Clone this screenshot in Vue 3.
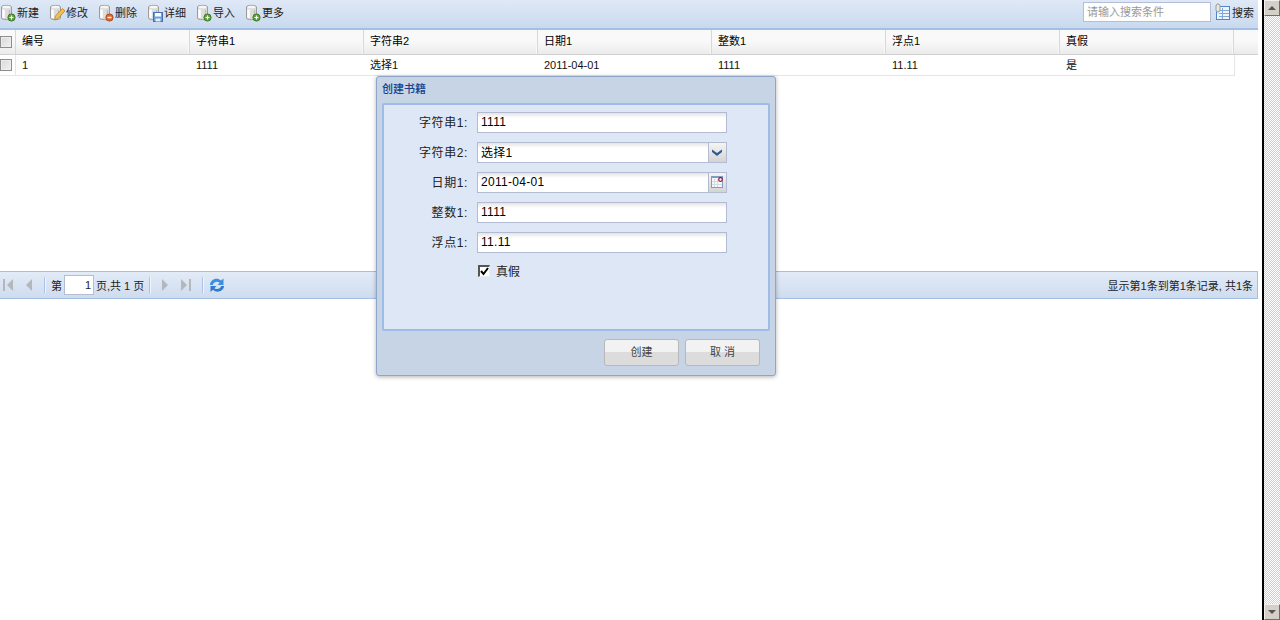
<script setup>
const tools = [
  { label: '新建', badge: 'add' },
  { label: '修改', badge: 'edit' },
  { label: '删除', badge: 'del' },
  { label: '详细', badge: 'save' },
  { label: '导入', badge: 'add' },
  { label: '更多', badge: 'add' },
]
const cols = ['编号', '字符串1', '字符串2', '日期1', '整数1', '浮点1', '真假']
const row = ['1', '1111', '选择1', '2011-04-01', '1111', '11.11', '是']
const fields = [
  { label: '字符串1:', value: '1111' },
  { label: '字符串2:', value: '选择1', addon: 'select' },
  { label: '日期1:', value: '2011-04-01', addon: 'date' },
  { label: '整数1:', value: '1111' },
  { label: '浮点1:', value: '11.11' },
]
</script>

<template>
  <div class="page">
    <div class="main">
      <div class="toolbar">
        <div v-for="t in tools" :key="t.label" class="tool">
          <svg class="ico" width="16" height="18" viewBox="0 0 16 18">
            <path d="M1.5 3C1.5 .8 11.5 .8 11.5 3V14C11.5 16.2 1.5 16.2 1.5 14Z" fill="#dcdcdc" stroke="#9c9c9c" />
            <ellipse cx="6.5" cy="3" rx="4" ry="1.3" fill="#f6f6f6" />
            <path d="M3.5 5.5V14" stroke="#fff" stroke-width="2.4" />
            <path d="M9.5 6V14" stroke="#bdbdbd" stroke-width="1.4" />
            <g v-if="t.badge === 'add'">
              <circle cx="11.5" cy="13.5" r="3.6" fill="#5f9f3c" stroke="#3f7a25" />
              <path d="M9.5 13.5H13.5M11.5 11.5V15.5" stroke="#fff" stroke-width="1.2" />
            </g>
            <g v-else-if="t.badge === 'del'">
              <circle cx="11.5" cy="13.5" r="3.6" fill="#e0662a" stroke="#b5481a" />
              <path d="M9.5 13.5H13.5" stroke="#fff" stroke-width="1.4" />
            </g>
            <g v-else-if="t.badge === 'edit'">
              <path d="M5.5 16L6.5 12L13.5 4.5L16 6.8L9 14.5Z" fill="#f2c14f" stroke="#b5832a" stroke-width=".8" />
            </g>
            <g v-else>
              <rect x="6.5" y="8.5" width="9" height="9" fill="#6d9ee0" stroke="#3f6fb8" />
              <rect x="8" y="9" width="6" height="3.5" fill="#fff" />
              <rect x="8.5" y="14.5" width="5" height="3" fill="#e6edf8" />
            </g>
          </svg>
          <span>{{ t.label }}</span>
        </div>
        <div class="spacer"></div>
        <div class="searchbox">请输入搜索条件</div>
        <div class="searchbtn">
          <svg width="16" height="18" viewBox="0 0 16 18">
            <rect x="1.5" y="3.5" width="13" height="13" fill="#eef4fb" stroke="#4f86c6" />
            <path d="M4 7.5H14M4 10.5H14M4 13.5H14M7.5 5V16" stroke="#7fa8d8" />
            <rect x="1" y="1" width="4" height="8" rx="2" fill="#e8e8e8" stroke="#999" />
          </svg>
          <span>搜索</span>
        </div>
      </div>

      <div class="grid">
        <div class="grid-head">
          <div class="chk-cell"><i class="chk"></i></div>
          <div v-for="c in cols" :key="c" class="hcell">{{ c }}</div>
          <div class="hrest"></div>
        </div>
        <div class="grid-row">
          <div class="chk-cell rowchk"><i class="chk"></i></div>
          <div v-for="(c, i) in row" :key="i" class="cell">{{ c }}</div>
        </div>
      </div>

      <div class="pager">
        <svg class="pg first" width="13" height="14" viewBox="0 0 13 14"><rect x="1" y="1" width="2" height="12" fill="#b4b8bd" /><path d="M11 1V13L5 7Z" fill="#b4b8bd" /></svg>
        <svg class="pg prev" width="11" height="14" viewBox="0 0 11 14"><path d="M9 1V13L3 7Z" fill="#b4b8bd" /></svg>
        <i class="sep s1"></i>
        <span class="pg-t">第</span>
        <div class="pg-input">1</div>
        <span class="pg-t2">页,共 1 页</span>
        <i class="sep s2"></i>
        <svg class="pg next" width="11" height="14" viewBox="0 0 11 14"><path d="M3 1V13L9 7Z" fill="#b4b8bd" /></svg>
        <svg class="pg last" width="13" height="14" viewBox="0 0 13 14"><path d="M2 1V13L8 7Z" fill="#b4b8bd" /><rect x="10" y="1" width="2" height="12" fill="#b4b8bd" /></svg>
        <i class="sep s3"></i>
        <svg class="refresh" width="16" height="16" viewBox="0 0 16 16">
          <path d="M1 8C1 2.5 8 -.5 12 3.5L14.5 1.5V8H8.5L10.7 5.7C8 3.5 4.5 5 3.8 8Z" fill="#3d8fe0" />
          <path d="M15 9C15 13.8 8 16.8 4 12.8L1.5 15V9H7.5L5.4 11.2C8 13 11.5 11.7 12.2 9Z" fill="#2f7ad0" />
        </svg>
        <div class="spacer"></div>
        <span class="pg-info">显示第1条到第1条记录, 共1条</span>
      </div>
    </div>

    <div class="gutter"></div>
    <div class="scrollbar">
      <div class="sb-btn"><i class="up"></i></div>
      <div class="sb-track"></div>
      <div class="sb-btn"><i class="down"></i></div>
    </div>

    <div class="dialog">
      <div class="dlg-title">创建书籍</div>
      <div class="dlg-body">
        <div v-for="f in fields" :key="f.label" class="frow">
          <label class="flabel">{{ f.label }}</label>
          <div class="finput">
            <span class="fval">{{ f.value }}</span>
            <div v-if="f.addon" class="addon">
              <svg v-if="f.addon === 'select'" width="16" height="19" viewBox="0 0 16 19">
                <path d="M3 6.5L8 10L13 6.5V9L8 13L3 9Z" fill="#2f5a96" />
              </svg>
              <svg v-else width="16" height="19" viewBox="0 0 16 19">
                <rect x="2.5" y="3.5" width="11" height="11" fill="#f4f6fa" stroke="#7f9cc4" />
                <rect x="2" y="3" width="12" height="2" fill="#7f9cc4" />
                <path d="M5.5 6V14M8.5 6V14M3 8.5H13M3 11.5H13" stroke="#d5dbe6" />
                <circle cx="11.5" cy="6.5" r="1.8" fill="#fff" stroke="#9c1026" stroke-width="1.2" />
              </svg>
            </div>
          </div>
        </div>
        <div class="frow checkrow">
          <div class="flabel"></div>
          <i class="dlg-check">
            <svg width="9" height="9" viewBox="0 0 9 9"><path d="M1 4L3.5 7L8 1" fill="none" stroke="#000" stroke-width="2" /></svg>
          </i>
          <span class="check-t">真假</span>
        </div>
      </div>
      <div class="dlg-foot">
        <div class="btn">创建</div>
        <div class="btn">取 消</div>
      </div>
    </div>
  </div>
</template>

<style scoped>
.page {
  position: relative;
  display: flex;
  width: 1280px;
  height: 620px;
  overflow: hidden;
  background: #fff;
  font: 11px "Liberation Sans", "Noto Sans CJK SC", sans-serif;
  color: #000;
}
.main { width: 1258px; flex: none; display: flex; flex-direction: column; }
.spacer { flex: 1; }

.toolbar {
  height: 24px;
  box-sizing: content-box;
  display: flex;
  align-items: center;
  background: linear-gradient(#dfe9f6, #c9d9ee);
  border-bottom: 2px solid #a3bfe4;
  padding-right: 4px;
  padding-bottom: 4px;
  color: #222;
}
.tool { width: 49px; display: flex; align-items: center; flex: none; }
.ico { flex: none; margin-top: 2px; }
.tool span { margin-left: 1px; }
.searchbox {
  width: 123px;
  height: 18px;
  line-height: 18px;
  padding-left: 3px;
  border: 1px solid #b3bdd6;
  background: #fff;
  color: #999;
  margin-right: 4px;
}
.searchbtn { display: flex; align-items: center; gap: 1px; }

.grid { height: 241px; }
.grid-head {
  display: flex;
  height: 24px;
  background: linear-gradient(#f9f9f9 45%, #ebebeb);
  border-bottom: 1px solid #d0d0d0;
}
.chk-cell { width: 15px; flex: none; border-right: 1px solid #d8d8d8; display: flex; align-items: center; overflow: hidden; }
.chk {
  display: block;
  flex: none;
  width: 10px;
  height: 10px;
  margin-left: 0;
  border: 1px solid #8d8d8d;
  background: linear-gradient(135deg, #d8d8d8, #f2f2f2);
  box-shadow: inset 0 0 0 1px #eee;
}
.hcell {
  flex: none;
  padding-left: 6px;
  box-sizing: border-box;
  width: 174px;
  line-height: 22px;
  border-right: 1px solid #d8d8d8;
  box-shadow: inset -1px 0 0 #f8f8f8;
}
.hrest { flex: 1; }
.grid-row {
  display: flex;
  width: 1235px;
  height: 21px;
  box-sizing: border-box;
  border-bottom: 1px solid #e6e6e6;
  border-right: 1px solid #e6e6e6;
}
.rowchk { border-right: 1px solid #e6e6e6; }
.cell { width: 174px; flex: none; box-sizing: border-box; padding-left: 6px; line-height: 20px; color: #111; }

.pager {
  height: 26px;
  display: flex;
  align-items: center;
  background: linear-gradient(#e2ebf7, #cfdcef);
  border-top: 1px solid #a3bfe4;
  border-bottom: 1px solid #a3bfe4;
  border-right: 1px solid #a3bfe4;
  color: #222;
}
.pg { flex: none; }
.first { margin-left: 2px; }
.prev { margin-left: 8px; }
.sep { display: block; width: 1px; height: 16px; background: #a9c3e8; box-shadow: 1px 0 0 #f0f5fb; flex: none; }
.s1 { margin-left: 10px; }
.pg-t { margin-left: 6px; }
.pg-input {
  width: 26px;
  height: 18px;
  line-height: 18px;
  margin-left: 2px;
  border: 1px solid #b5bdd0;
  background: #fff;
  text-align: right;
  padding-right: 2px;
  box-sizing: content-box;
}
.pg-t2 { margin-left: 2px; }
.s2 { margin-left: 5px; }
.next { margin-left: 9px; }
.last { margin-left: 9px; }
.s3 { margin-left: 10px; }
.refresh { margin-left: 6px; }
.pg-info { margin-right: 4px; }

.gutter { width: 4px; flex: none; }
.scrollbar {
  width: 18px;
  flex: none;
  border-left: 2px solid #000;
  box-sizing: border-box;
  display: flex;
  flex-direction: column;
  background-color: #fff;
  background-image: conic-gradient(#d4d0c8 25%, #fff 0 50%, #d4d0c8 0 75%, #fff 0);
  background-size: 2px 2px;
}
.sb-btn {
  height: 16px;
  background: #d4d0c8;
  border-top: 1px solid #f2f0ec;
  border-left: 1px solid #f2f0ec;
  border-right: 1px solid #6e6e6a;
  border-bottom: 1px solid #6e6e6a;
  box-sizing: border-box;
  display: flex;
  align-items: center;
  justify-content: center;
}
.sb-track { flex: 1; }
.up, .down { display: block; width: 0; height: 0; border-left: 4px solid transparent; border-right: 4px solid transparent; }
.up { border-bottom: 4px solid #555; }
.down { border-top: 4px solid #555; }

.dialog {
  position: absolute;
  left: 376px;
  top: 76px;
  width: 400px;
  height: 300px;
  box-sizing: border-box;
  background: #c7d4e6;
  border: 1px solid #8ea6c8;
  border-radius: 3px;
  box-shadow: 0 1px 4px rgba(0, 0, 0, .3);
  display: flex;
  flex-direction: column;
  font-size: 12px;
}
.dlg-title { height: 26px; line-height: 24px; padding-left: 5px; font-size: 11px; font-weight: 500; color: #15428b; flex: none; }
.dlg-body {
  margin: 0 5px;
  height: 228px;
  box-sizing: border-box;
  background: #dde7f6;
  border: 2px solid #9dbde8;
  border-radius: 2px;
  padding-top: 7px;
  flex: none;
}
.frow { display: flex; align-items: center; height: 21px; margin-bottom: 9px; }
.flabel { text-align: right; padding-right: 9px; padding-bottom: 2px; flex: none; width: 84px; color: #222; letter-spacing: .6px; }
.finput {
  width: 250px;
  height: 21px;
  box-sizing: border-box;
  border: 1px solid #b3bbd2;
  background: linear-gradient(#e4e4e4, #fff 5px);
  display: flex;
  align-items: center;
  flex: none;
  padding-left: 3px;
  letter-spacing: .3px;
}
.fval { flex: 1; padding-bottom: 2px; }
.addon {
  width: 17px;
  height: 19px;
  background: linear-gradient(#f4f4f4, #d4d4d4);
  border-left: 1px solid #b3bbd2;
  flex: none;
}
.addon svg { display: block; }
.checkrow { margin-top: -2px; }
.dlg-check {
  display: flex;
  align-items: center;
  justify-content: center;
  width: 9px;
  height: 9px;
  flex: none;
  margin-left: 1px;
  border: solid;
  border-width: 2px 1px 1px 2px;
  border-color: #555 #eee #eee #555;
  background: #fff;
}
.check-t { margin-left: 6px; color: #222; }
.dlg-foot { display: flex; justify-content: flex-end; gap: 6px; padding: 8px 15px 0 0; }
.btn {
  width: 75px;
  height: 27px;
  box-sizing: border-box;
  border: 1px solid #b8b8b8;
  border-radius: 3px;
  background: linear-gradient(#f2f2f2 50%, #dcdcdc 50%);
  text-align: center;
  line-height: 25px;
  font-size: 11px;
  color: #444;
}
</style>
